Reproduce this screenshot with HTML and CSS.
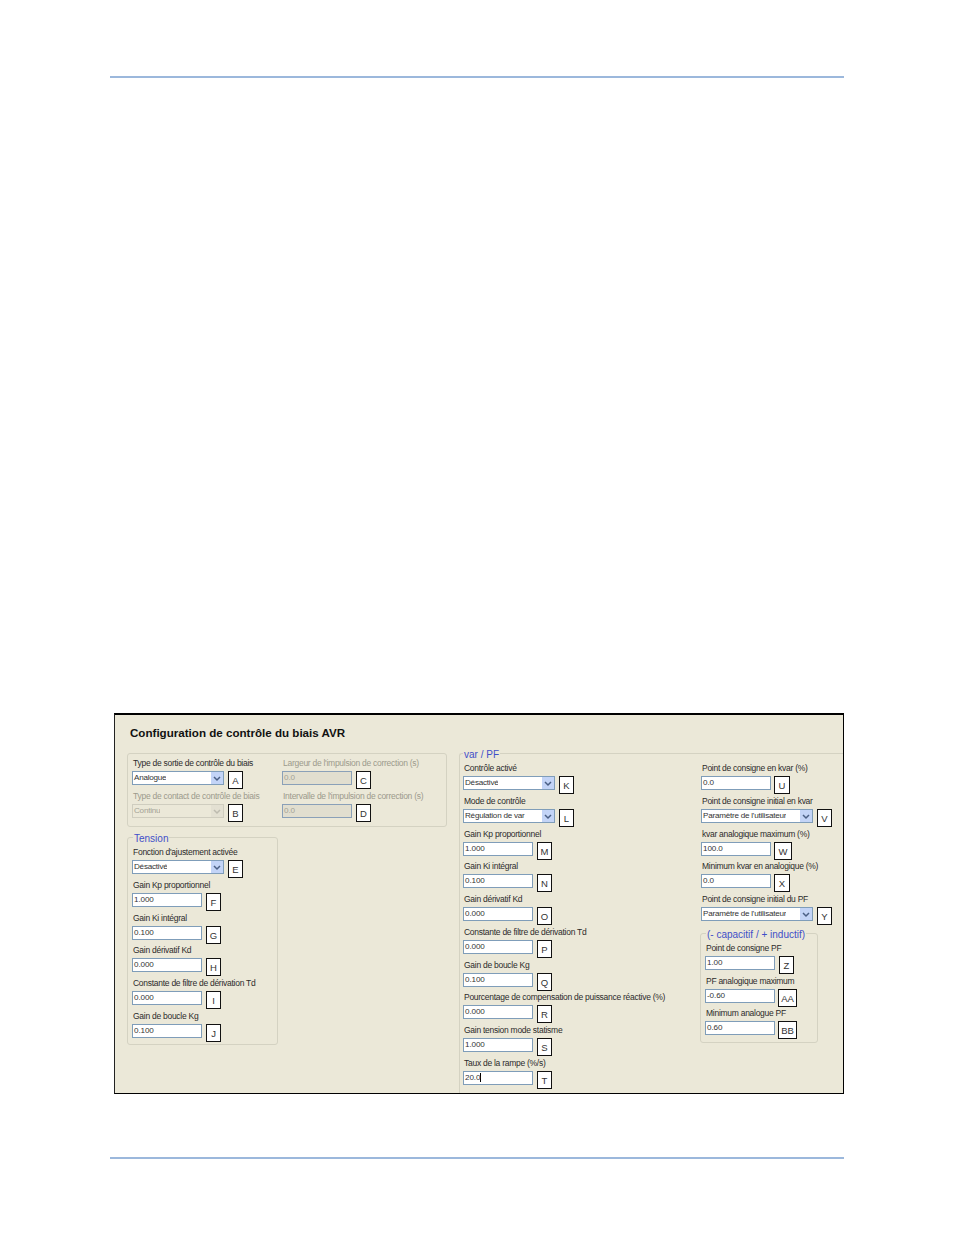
FILE: index.html
```html
<!DOCTYPE html>
<html lang="fr">
<head>
<meta charset="utf-8">
<title>Configuration de contrôle du biais AVR</title>
<link rel="stylesheet" href="styles.css">
</head>
<body>
<div class="page">
  <div class="rule rule-top"></div>
  <section class="panel">
    <h1 class="title">Configuration de contrôle du biais AVR</h1>
    <div class="columns">
      <div class="col-left">
        <div class="group group-type">
          <div class="type-col">
            <div class="field"><div class="label">Type de sortie de contrôle du biais</div><div class="row"><div class="combo w92"><span class="combo-text">Analogue</span><span class="arrow"><svg viewBox="0 0 12 13" width="12" height="13"><path d="M3 5l3 3 3-3" class="chev"/></svg></span></div><div class="badge">A</div></div></div>
            <div class="field"><div class="label off">Type de contact de contrôle de biais</div><div class="row"><div class="combo w92 combo-off"><span class="combo-text">Continu</span><span class="arrow"><svg viewBox="0 0 12 13" width="12" height="13"><path d="M3 5l3 3 3-3" class="chev"/></svg></span></div><div class="badge">B</div></div></div>
          </div>
          <div class="pulse-col">
            <div class="field"><div class="label off">Largeur de l'impulsion de correction (s)</div><div class="row"><div class="input input-off">0.0</div><div class="badge">C</div></div></div>
            <div class="field"><div class="label off">Intervalle de l'impulsion de correction (s)</div><div class="row"><div class="input input-off">0.0</div><div class="badge">D</div></div></div>
          </div>
        </div>
        <div class="group group-tension">
          <span class="legend legend-tension">Tension</span>
          <div class="field"><div class="label">Fonction d'ajustement activée</div><div class="row"><div class="combo w92"><span class="combo-text">Désactivé</span><span class="arrow"><svg viewBox="0 0 12 13" width="12" height="13"><path d="M3 5l3 3 3-3" class="chev"/></svg></span></div><div class="badge">E</div></div></div>
          <div class="field"><div class="label">Gain Kp proportionnel</div><div class="row"><div class="input">1.000</div><div class="badge">F</div></div></div>
          <div class="field"><div class="label">Gain Ki intégral</div><div class="row"><div class="input">0.100</div><div class="badge">G</div></div></div>
          <div class="field"><div class="label">Gain dérivatif Kd</div><div class="row"><div class="input">0.000</div><div class="badge">H</div></div></div>
          <div class="field"><div class="label">Constante de filtre de dérivation Td</div><div class="row"><div class="input">0.000</div><div class="badge">I</div></div></div>
          <div class="field"><div class="label">Gain de boucle Kg</div><div class="row"><div class="input">0.100</div><div class="badge">J</div></div></div>
        </div>
      </div>
      <div class="group-var">
        <span class="legend legend-var">var / PF</span>
        <div class="var-mid">
          <div class="field"><div class="label">Contrôle activé</div><div class="row"><div class="combo w92"><span class="combo-text">Désactivé</span><span class="arrow"><svg viewBox="0 0 12 13" width="12" height="13"><path d="M3 5l3 3 3-3" class="chev"/></svg></span></div><div class="badge">K</div></div></div>
          <div class="field"><div class="label">Mode de contrôle</div><div class="row"><div class="combo w92"><span class="combo-text">Régulation de var</span><span class="arrow"><svg viewBox="0 0 12 13" width="12" height="13"><path d="M3 5l3 3 3-3" class="chev"/></svg></span></div><div class="badge">L</div></div></div>
          <div class="field"><div class="label">Gain Kp proportionnel</div><div class="row"><div class="input">1.000</div><div class="badge">M</div></div></div>
          <div class="field"><div class="label">Gain Ki intégral</div><div class="row"><div class="input">0.100</div><div class="badge">N</div></div></div>
          <div class="field"><div class="label">Gain dérivatif Kd</div><div class="row"><div class="input">0.000</div><div class="badge">O</div></div></div>
          <div class="field"><div class="label">Constante de filtre de dérivation Td</div><div class="row"><div class="input">0.000</div><div class="badge">P</div></div></div>
          <div class="field"><div class="label">Gain de boucle Kg</div><div class="row"><div class="input">0.100</div><div class="badge">Q</div></div></div>
          <div class="field"><div class="label">Pourcentage de compensation de puissance réactive (%)</div><div class="row"><div class="input">0.000</div><div class="badge">R</div></div></div>
          <div class="field"><div class="label">Gain tension mode statisme</div><div class="row"><div class="input">1.000</div><div class="badge">S</div></div></div>
          <div class="field"><div class="label">Taux de la rampe (%/s)</div><div class="row"><div class="input"><span class="caret">20.0</span></div><div class="badge">T</div></div></div>
        </div>
        <div class="var-right">
          <div class="field"><div class="label">Point de consigne en kvar (%)</div><div class="row row-tight"><div class="input">0.0</div><div class="badge b16">U</div></div></div>
          <div class="field"><div class="label">Point de consigne initial en kvar</div><div class="row"><div class="combo w112"><span class="combo-text">Paramètre de l'utilisateur</span><span class="arrow"><svg viewBox="0 0 12 13" width="12" height="13"><path d="M3 5l3 3 3-3" class="chev"/></svg></span></div><div class="badge">V</div></div></div>
          <div class="field"><div class="label">kvar analogique maximum (%)</div><div class="row row-tight"><div class="input">100.0</div><div class="badge b18">W</div></div></div>
          <div class="field"><div class="label">Minimum kvar en analogique (%)</div><div class="row row-tight"><div class="input">0.0</div><div class="badge b16">X</div></div></div>
          <div class="field"><div class="label">Point de consigne initial du PF</div><div class="row"><div class="combo w112"><span class="combo-text">Paramètre de l'utilisateur</span><span class="arrow"><svg viewBox="0 0 12 13" width="12" height="13"><path d="M3 5l3 3 3-3" class="chev"/></svg></span></div><div class="badge">Y</div></div></div>
          <div class="group group-pf">
            <span class="legend legend-pf">(- capacitif / + inductif)</span>
            <div class="field"><div class="label">Point de consigne PF</div><div class="row"><div class="input">1.00</div><div class="badge">Z</div></div></div>
            <div class="field"><div class="label">PF analogique maximum</div><div class="row row-tight"><div class="input">-0.60</div><div class="badge b19">AA</div></div></div>
            <div class="field"><div class="label">Minimum analogue PF</div><div class="row row-tight"><div class="input">0.60</div><div class="badge b19">BB</div></div></div>
          </div>
        </div>
      </div>
    </div>
  </section>
  <div class="rule rule-bottom"></div>
</div>
</body>
</html>
```

FILE: styles.css
```css
html, body { margin: 0; padding: 0; background: #fff; }
body { font-family: "Liberation Sans", Arial, sans-serif; color: #2b2b2b; }
.page { width: 734px; margin-left: 110px; padding-top: 76px; }
.rule { height: 2px; background: #9cb8dc; }
.panel {
  box-sizing: border-box; width: 730px; height: 381px; margin: 635px 0 0 4px;
  padding: 10px 0 0 12px; background: #ebe8d8;
  border: 1px solid #000; border-top-width: 2px; border-left-color: #222;
  overflow: hidden;
}
.rule-bottom { margin-top: 63px; }
.title { margin: 0 0 12px; font-size: 11.6px; line-height: 16px; font-weight: bold; color: #111; padding-left: 3px; }
.columns { display: flex; gap: 12px; align-items: flex-start; }
.col-left { width: 320px; flex: none; display: flex; flex-direction: column; gap: 10px; }
.group { position: relative; box-sizing: border-box; border: 1px solid #d4d2c2; border-radius: 3px; }
.group-type { display: flex; height: 74px; width: 320px; padding: 3px 0 0 4px; }
.type-col { width: 150px; flex: none; }
.group-tension { width: 151px; height: 208px; padding: 8px 0 0 4px; }
.group-var {
  position: relative; box-sizing: border-box; flex: 1; height: 340px; display: flex;
  border-top: 1px solid #d4d2c2; border-left: 1px solid #d4d2c2; border-top-left-radius: 3px;
  padding: 8px 0 0 3px;
}
.var-mid { width: 238px; flex: none; }
.var-right { flex: 1; }
.group-pf { width: 118px; height: 110px; margin: 7px 0 0 -1px; padding: 8px 0 0 4px; }
.legend { position: absolute; background: #ebe8d8; color: #3f4fc8; font-size: 10px; line-height: 11px; padding: 0 1px; white-space: nowrap; }
.legend-tension { left: 5px; top: -5px; }
.legend-var { left: 3px; top: -5px; }
.legend-pf { left: 5px; top: -5px; }
.field { height: 32.75px; }
.label { height: 12px; margin: 0 0 2px 1px; font-size: 8.5px; letter-spacing: -0.27px; line-height: 12px; white-space: nowrap; }
.label.off { color: #9b9a8c; }
.row { display: flex; align-items: flex-start; gap: 4px; }
.row-tight { gap: 3px; }
.input {
  box-sizing: border-box; width: 70px; height: 14px; background: #fff;
  border: 1px solid #7f9db9; font-size: 8.1px; letter-spacing: -0.1px; line-height: 12px; padding-left: 1px; color: #333;
}
.input-off { background: #e1decf; border-color: #8aa0b8; color: #a3a295; }
.caret { border-right: 1px solid #000; }
.combo {
  box-sizing: border-box; height: 14px; display: flex; justify-content: space-between;
  background: #fff; border: 1px solid #7f9db9; font-size: 8.1px; letter-spacing: -0.23px; line-height: 12px; color: #333;
}
.combo-text { padding-left: 1px; white-space: nowrap; overflow: hidden; }
.arrow { flex: none; width: 12px; height: 12px; background: #c3d4f7; }
.arrow svg { display: block; }
.chev { fill: none; stroke: #4a5f85; stroke-width: 1.5; }
.w92 { width: 92px; }
.w112 { width: 112px; }
.combo-off { background: #ebe8d8; border-color: #cfcdbf; color: #a3a295; }
.combo-off .arrow { background: #e3e0d2; }
.combo-off .chev { stroke: #bdbbaf; }
.badge {
  box-sizing: border-box; flex: none; width: 15px; height: 18px;
  background: #fff; border: 1px solid #111; font-size: 9.5px; line-height: 18px; text-align: center; color: #333;
}
.b16 { width: 16px; }
.b18 { width: 18px; }
.b19 { width: 19px; }
```
